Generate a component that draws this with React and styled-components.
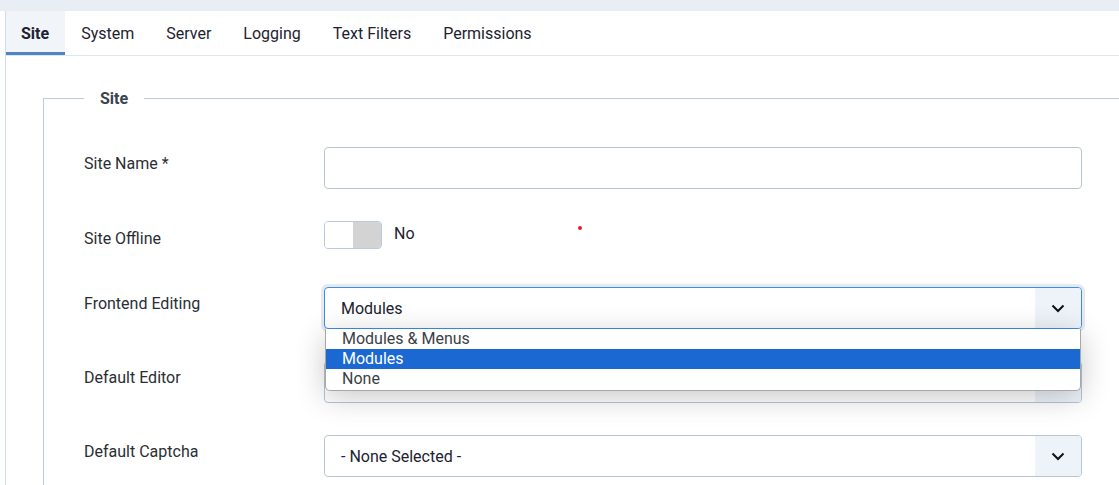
import styled, { createGlobalStyle } from "styled-components";

const GlobalStyle = createGlobalStyle`
    html, body {
        margin: 0;
        padding: 0;
        background: #fff;
        font-family: Roboto, "Liberation Sans", sans-serif;
        color: #22262a;
        overflow: hidden;
    }
`

//Styles
const TopStrip = styled.div`
    height: 11px;
    background: #e9eef4;
`

const Page = styled.div`
    margin-left: 5px;
    border-left: 1px solid #d3deeb;
    min-height: 474px;
`

const TabBar = styled.div`
    display: flex;
    height: 44px;
    border-bottom: 1px solid #dfe5ec;
`

const Tab = styled.div`
    display: flex;
    align-items: center;
    padding: 0 16px 0 ${p => p.active ? 15 : 16}px;
    font-size: 16px;
    color: #1c2230;
    font-weight: ${p => p.active ? 700 : 400};
    background: ${p => p.active ? '#f1f4f8' : 'transparent'};
    box-shadow: ${p => p.active ? 'inset 0 -3px 0 #4f84c6' : 'none'};
`

const Fieldset = styled.fieldset`
    margin: 33px -40px 0 37px;
    padding: 39px 76px 0 40px;
    border: 1px solid #b9cbe2;
    border-bottom: none;
    min-width: 0;
`

const Legend = styled.legend`
    padding: 0 16px;
    font-size: 16px;
    font-weight: 700;
    color: #3a4250;
`

const Row = styled.div`
    display: grid;
    grid-template-columns: 240px 1fr;
    margin-bottom: ${p => p.gap || 32}px;
    min-height: ${p => p.h || 42}px;
    position: relative;
`

const Label = styled.label`
    padding-top: ${p => p.top || 7}px;
    font-size: 16px;
    color: #2a2e33;
`

const TextInput = styled.div`
    height: 40px;
    border: 1px solid #b8c5d6;
    border-radius: 4px;
    background: #fff;
`

const SwitchWrap = styled.div`
    display: flex;
    align-items: flex-start;
    gap: 12px;
    font-size: 16px;
    color: #1c2230;
`

const Switch = styled.div`
    width: 56px;
    height: 26px;
    border: 1px solid #b9c9e0;
    border-radius: 4px;
    display: flex;
    overflow: hidden;

    & span:last-child {
        flex: 1;
        background: #d3d3d3;
    }
    & span:first-child {
        width: 28px;
        background: #fff;
    }
`

const SwitchText = styled.span`
    line-height: 26px;
`

const Select = styled.div`
    position: relative;
    height: 40px;
    border: 1px solid ${p => p.focus ? '#3d8de8' : '#b8c5d6'};
    border-radius: 4px;
    background: #fff;
    display: flex;
    align-items: center;
    font-size: 16px;
    color: #1c2230;
    box-shadow: ${p => p.focus ? '0 0 0 3px rgba(220,224,230,0.7)' : 'none'};
    overflow: hidden;
`

const SelectText = styled.span`
    flex: 1;
    padding-left: 16px;
`

const Arrow = styled.div`
    width: 46px;
    height: 100%;
    background: #eef3fa;
    display: flex;
    align-items: center;
    justify-content: center;
`

const Menu = styled.ul`
    position: absolute;
    top: 42px;
    left: 241px;
    right: 1px;
    margin: 0;
    padding: 0 0 1px;
    list-style: none;
    background: #fff;
    border: 1px solid #a8a8a8;
    border-top: none;
    border-radius: 0 0 5px 5px;
    box-shadow: 0 6px 30px rgba(0,0,0,0.22);
    z-index: 5;
    overflow: hidden;
`

const Option = styled.li`
    height: 20px;
    line-height: 20px;
    padding-left: 16px;
    font-size: 16px;
    color: ${p => p.selected ? '#fff' : '#3b3f45'};
    background: ${p => p.selected ? '#1b68d3' : 'transparent'};
`

const Dot = styled.span`
    position: absolute;
    left: 494px;
    top: 5px;
    width: 4px;
    height: 4px;
    border-radius: 50%;
    background: #e8202a;
`

function Chevron() {
    return (
        <svg width="16" height="16" viewBox="0 0 16 16" fill="none">
            <path d="M2.5 5.5 L8 11 L13.5 5.5" stroke="#111" strokeWidth="2" />
        </svg>
    )
}

const tabs = ['Site', 'System', 'Server', 'Logging', 'Text Filters', 'Permissions']

//Component
function App() {
    return (
        <>
            <GlobalStyle />
            <TopStrip />
            <Page>
                <TabBar>
                    {tabs.map(t => <Tab key={t} active={t === 'Site'}>{t}</Tab>)}
                </TabBar>
                <Fieldset>
                    <Legend>Site</Legend>
                    <Row>
                        <Label>Site Name *</Label>
                        <TextInput />
                    </Row>
                    <Row h={34} gap={32}>
                        <Label top={8}>Site Offline</Label>
                        <SwitchWrap>
                            <Switch><span /><span /></Switch>
                            <SwitchText>No</SwitchText>
                        </SwitchWrap>
                        <Dot />
                    </Row>
                    <Row>
                        <Label>Frontend Editing</Label>
                        <Select focus>
                            <SelectText>Modules</SelectText>
                            <Arrow><Chevron /></Arrow>
                        </Select>
                        <Menu>
                            <Option>Modules &amp; Menus</Option>
                            <Option selected>Modules</Option>
                            <Option>None</Option>
                        </Menu>
                    </Row>
                    <Row>
                        <Label>Default Editor</Label>
                        <Select>
                            <SelectText />
                            <Arrow><Chevron /></Arrow>
                        </Select>
                    </Row>
                    <Row>
                        <Label>Default Captcha</Label>
                        <Select>
                            <SelectText>- None Selected -</SelectText>
                            <Arrow><Chevron /></Arrow>
                        </Select>
                    </Row>
                </Fieldset>
            </Page>
        </>
    )
}

export default App
